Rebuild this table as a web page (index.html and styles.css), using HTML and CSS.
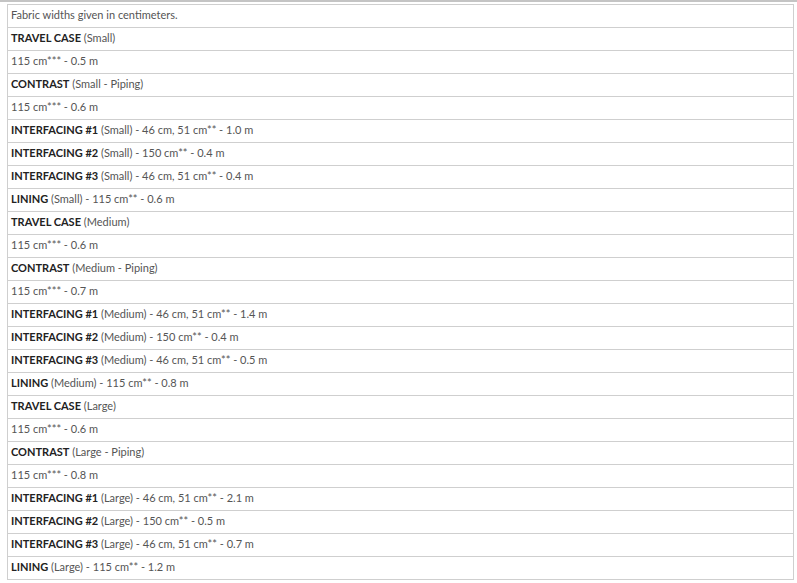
FILE: index.html
```html
<html lang="en">
  <head>
    <meta charset="UTF-8" />
    <meta name="viewport" content="width=device-width, initial-scale=1.0" />
    <title>Fabric Requirements</title>
    <link rel="stylesheet" href="styles.css">
  </head>
  <body>
    <div class="page">
      <table class="fabric">
        <tbody>
          <tr><td>Fabric widths given in centimeters.</td></tr>
          <tr><td><b>TRAVEL CASE</b> (Small)</td></tr>
          <tr><td>115 cm*** - 0.5 m</td></tr>
          <tr><td><b>CONTRAST</b> (Small - Piping)</td></tr>
          <tr><td>115 cm*** - 0.6 m</td></tr>
          <tr><td><b>INTERFACING #1</b> (Small) - 46 cm, 51 cm** - 1.0 m</td></tr>
          <tr><td><b>INTERFACING #2</b> (Small) - 150 cm** - 0.4 m</td></tr>
          <tr><td><b>INTERFACING #3</b> (Small) - 46 cm, 51 cm** - 0.4 m</td></tr>
          <tr><td><b>LINING</b> (Small) - 115 cm** - 0.6 m</td></tr>
          <tr><td><b>TRAVEL CASE</b> (Medium)</td></tr>
          <tr><td>115 cm*** - 0.6 m</td></tr>
          <tr><td><b>CONTRAST</b> (Medium - Piping)</td></tr>
          <tr><td>115 cm*** - 0.7 m</td></tr>
          <tr><td><b>INTERFACING #1</b> (Medium) - 46 cm, 51 cm** - 1.4 m</td></tr>
          <tr><td><b>INTERFACING #2</b> (Medium) - 150 cm** - 0.4 m</td></tr>
          <tr><td><b>INTERFACING #3</b> (Medium) - 46 cm, 51 cm** - 0.5 m</td></tr>
          <tr><td><b>LINING</b> (Medium) - 115 cm** - 0.8 m</td></tr>
          <tr><td><b>TRAVEL CASE</b> (Large)</td></tr>
          <tr><td>115 cm*** - 0.6 m</td></tr>
          <tr><td><b>CONTRAST</b> (Large - Piping)</td></tr>
          <tr><td>115 cm*** - 0.8 m</td></tr>
          <tr><td><b>INTERFACING #1</b> (Large) - 46 cm, 51 cm** - 2.1 m</td></tr>
          <tr><td><b>INTERFACING #2</b> (Large) - 150 cm** - 0.5 m</td></tr>
          <tr><td><b>INTERFACING #3</b> (Large) - 46 cm, 51 cm** - 0.7 m</td></tr>
          <tr><td><b>LINING</b> (Large) - 115 cm** - 1.2 m</td></tr>
        </tbody>
      </table>
    </div>
  </body>
</html>
```

FILE: styles.css
```css
body {
  margin: 0;
  background: #fff;
  font-family: "Lato", "Noto Sans", sans-serif;
}

.page {
  border-top: 2px solid #c4c4c4;
  padding: 2px 3px 0 7px;
}

.fabric {
  width: 787px;
  border-collapse: collapse;
  font-size: 11px;
  color: #555;
}

.fabric td {
  height: 23px;
  padding: 0 3px 3px;
  border: 1px solid #cfcfcf;
  vertical-align: middle;
  white-space: nowrap;
}

.fabric b {
  color: #222;
  font-weight: 700;
}
```
